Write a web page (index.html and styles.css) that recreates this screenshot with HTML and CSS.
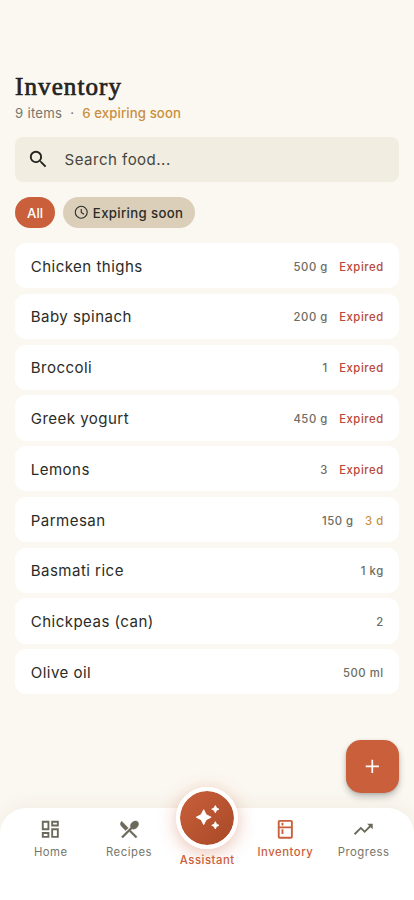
FILE: index.html
```html
<!DOCTYPE html>
<html lang="en">
<head>
<meta charset="utf-8">
<title>Inventory</title>
<link rel="stylesheet" href="styles.css">
</head>
<body>
<div class="screen">
  <main class="content">
    <h1 class="title">Inventory</h1>
    <p class="summary"><span>9 items</span><span class="dot">·</span><span class="soon">6 expiring soon</span></p>
    <div class="search">
      <svg viewBox="0 0 24 24"><path d="M15.5 14h-.79l-.28-.27A6.47 6.47 0 0 0 16 9.5 6.5 6.5 0 1 0 9.5 16c1.61 0 3.09-.59 4.23-1.57l.27.28v.79l5 4.99L20.49 19zm-6 0a4.5 4.5 0 1 1 0-9 4.5 4.5 0 0 1 0 9z"/></svg>
      <span>Search food...</span>
    </div>
    <div class="chips">
      <span class="chip chip-active">All</span>
      <span class="chip chip-soon"><svg viewBox="0 0 24 24"><circle cx="12" cy="12" r="9.9"/><path d="M12 6.5v6l4.5 2.7"/></svg>Expiring soon</span>
    </div>
    <ul class="list">
      <li><span class="name">Chicken thighs</span><span class="qty">500 g</span><span class="expired">Expired</span></li>
      <li><span class="name">Baby spinach</span><span class="qty">200 g</span><span class="expired">Expired</span></li>
      <li><span class="name">Broccoli</span><span class="qty">1</span><span class="expired">Expired</span></li>
      <li><span class="name">Greek yogurt</span><span class="qty">450 g</span><span class="expired">Expired</span></li>
      <li><span class="name">Lemons</span><span class="qty">3</span><span class="expired">Expired</span></li>
      <li><span class="name">Parmesan</span><span class="qty">150 g</span><span class="days">3 d</span></li>
      <li><span class="name">Basmati rice</span><span class="qty">1 kg</span></li>
      <li><span class="name">Chickpeas (can)</span><span class="qty">2</span></li>
      <li><span class="name">Olive oil</span><span class="qty">500 ml</span></li>
    </ul>
  </main>
  <button class="fab" aria-label="Add item"><svg viewBox="0 0 24 24"><path d="M19 12.9h-6.100V19h-1.800v-6.100H5v-1.800h6.100V5h1.800v6.100H19z"/></svg></button>
  <nav class="nav">
    <a class="tab"><svg viewBox="0 0 24 24"><path d="M19 5v2h-4V5h4M9 5v6H5V5h4m10 8v6h-4v-6h4M9 17v2H5v-2h4M21 3h-8v6h8V3zM11 3H3v10h8V3zm10 8h-8v10h8V11zm-10 4H3v6h8v-6z"/></svg>Home</a>
    <a class="tab"><svg viewBox="0 0 24 24"><path d="M8.1 13.34l2.83-2.83L3.91 3.5a4 4 0 0 0 0 5.66l4.19 4.18zm6.78-1.81c1.53.71 3.68.21 5.27-1.38 1.91-1.91 2.28-4.65.81-6.12-1.46-1.46-4.2-1.1-6.12.81-1.59 1.59-2.09 3.74-1.38 5.27L3.7 19.87l1.41 1.41L12 14.41l6.88 6.88 1.41-1.41L13.41 13l1.47-1.47z" stroke="currentColor" stroke-width=".5"/></svg>Recipes</a>
    <a class="tab assistant"><span class="orb"><svg viewBox="0 0 24 24"><path stroke="currentColor" stroke-width=".8" stroke-linejoin="round" d="M19.400 8l1.050-2.250L22.700 4.700l-2.250-1.050L19.400 1.400l-1.050 2.250L16.100 4.700l2.250 1.050zM19.400 16.100l-1.050 2.250-2.250 1.050 2.250 1.050 1.050 2.250 1.050-2.250 2.250-1.050-2.250-1.050zM11.100 9.700L8.800 5.200 6.500 9.700 2 12l4.500 2.300 2.300 4.500 2.300-4.500 4.500-2.300z"/></svg></span>Assistant</a>
    <a class="tab current"><svg viewBox="0 0 24 24"><path d="M18 2.010L6 2a2 2 0 0 0-2 2v16a2 2 0 0 0 2 2h12a2 2 0 0 0 2-2V4a2 2 0 0 0-2-1.990zM18 20H6v-9.020h12V20zm0-11H6V4h12v5zM8 5h2v3H8zM8 12h2v5H8z"/></svg>Inventory</a>
    <a class="tab"><svg viewBox="0 0 24 24"><path d="M16 6l2.290 2.290-4.880 4.880-4-4L2 16.590 3.410 18l6-6 4 4 6.300-6.290L22 12V6z"/></svg>Progress</a>
  </nav>
</div>
</body>
</html>
```
FILE: styles.css
```css
* { box-sizing: border-box; }
body { margin: 0; background: #fbf8f1; font-family: Inter, "Liberation Sans", sans-serif; color: #2b2c27; }
svg { display: block; fill: currentColor; flex: none; }
.screen { position: relative; height: 900px; overflow: hidden; display: flex; flex-direction: column; }
.content { flex: 1; padding: 72px 15.300px 0 15.100px; }
.title { margin: 0; height: 30px; font: 400 25px/30px "Liberation Serif", serif; letter-spacing: 1.080px; color: #23241f; -webkit-text-stroke: .7px #23241f; }
.summary { margin: 1px 0 0; height: 19px; line-height: 20px; font-size: 13.200px; letter-spacing: .24px; color: #77766b; display: flex; }
.dot { width: 20px; text-align: center; }
.soon { color: #c98f3d; font-weight: 550; letter-spacing: .1px; }
.search { margin-top: 15px; height: 45px; border-radius: 8px; background: #f1ede0; display: flex; align-items: center; padding-left: 11.500px; font-size: 15.060px; letter-spacing: .47px; color: #46473f; }
.search svg { width: 22.600px; height: 22.600px; color: #23241f; margin-right: 15.400px; }
.chips { display: flex; gap: 7.500px; margin-top: 15px; }
.chip { height: 31px; border-radius: 16px; display: flex; align-items: center; justify-content: center; font-size: 13.200px; font-weight: 500; letter-spacing: .1px; }
.chip-active { width: 40px; background: #c95f3b; color: #fff; }
.chip-soon { width: 132.500px; background: #dbcfba; color: #2b2c27; gap: 4px; letter-spacing: .35px; }
.chip svg { width: 14.500px; height: 14.500px; fill: none; stroke: currentColor; stroke-width: 1.800; }
.list { list-style: none; margin: 15px 0 0; padding: 0; display: flex; flex-direction: column; gap: 5.600px; }
.list li { height: 45.200px; border-radius: 11.300px; background: #fff; padding: 1px 15px 0 15.600px; display: flex; align-items: center; font-size: 11.300px; font-weight: 500; letter-spacing: .55px; }
.name { flex: 1; font-size: 15.060px; font-weight: 400; letter-spacing: .47px; }
.qty, .expired, .days { padding-top: 1px; }
.qty { color: #6d6c5f; }
.expired, .days { margin-left: 11.300px; color: #b8483a; }
.days { color: #c98f3d; }
.fab { position: absolute; left: 346px; top: 740px; width: 52.700px; height: 52.700px; padding: 0; border: 0; border-radius: 15px; background: #c95f3b; color: #fff; display: grid; place-items: center; box-shadow: 0 4px 7px rgba(0,0,0,.22), 0 1px 3px rgba(0,0,0,.12); }
.fab svg { width: 22.600px; height: 22.600px; }
.nav { height: 92.500px; background: #fff; border-radius: 26px 26px 0 0; padding: 0 11.300px 0 11.700px; display: flex; box-shadow: 0 -4px 18px rgba(90,60,20,.05); }
.tab { flex: 1; display: flex; flex-direction: column; align-items: center; padding-top: 10px; font-size: 11.300px; line-height: 15px; letter-spacing: .53px; color: #77766b; }
.tab svg { width: 22.600px; height: 22.600px; margin-bottom: 4.900px; color: #6a695b; }
.tab.current, .tab.assistant { color: #c95f3b; font-weight: 500; }
.tab.current svg { color: #c95f3b; }
.tab.assistant { padding-top: 0; margin-top: -21px; }
.orb { flex: none; width: 62px; height: 62px; border: 4px solid #fff; border-radius: 50%; background: linear-gradient(135deg, #c95f3b, #a84927) padding-box; display: grid; place-items: center; margin-bottom: 4px; box-shadow: 0 4px 18px rgba(201,95,59,.38); }
.tab .orb svg { width: 26.400px; height: 26.400px; margin: 0; color: #fff; }
```
